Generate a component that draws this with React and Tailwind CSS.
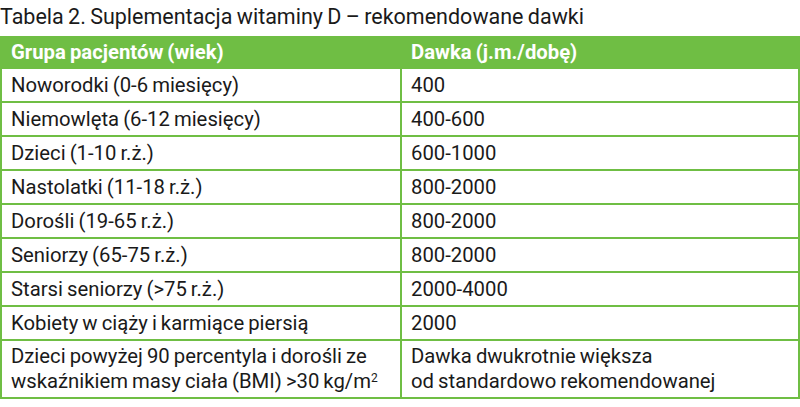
import React from 'react';

const rows = [
  ['Noworodki (0-6 miesięcy)', '400'],
  ['Niemowlęta (6-12 miesięcy)', '400-600'],
  ['Dzieci (1-10 r.ż.)', '600-1000'],
  ['Nastolatki (11-18 r.ż.)', '800-2000'],
  ['Dorośli (19-65 r.ż.)', '800-2000'],
  ['Seniorzy (65-75 r.ż.)', '800-2000'],
  ['Starsi seniorzy (>75 r.ż.)', '2000-4000'],
  ['Kobiety w ciąży i karmiące piersią', '2000'],
];

const App = () => {
  return (
    <div className="w-[800px] bg-white text-[#1a1a1a] font-['Roboto',sans-serif] [word-spacing:-1px]">
      {/* title */}
      <h1 className="h-[36px] pt-[3px] text-[21.5px] leading-[27px] font-normal">
        Tabela 2. Suplementacja witaminy D – rekomendowane dawki
      </h1>

      <table className="w-[800px] border-collapse table-fixed text-[20.3px] leading-[25px]">
        <thead>
          <tr className="bg-[#6fbe44] text-white h-[31px]">
            <th className="w-[400px] border-2 border-[#6fbe44] px-[9px] text-left font-bold">
              Grupa pacjentów (wiek)
            </th>
            <th className="border-2 border-[#6fbe44] px-[9px] text-left font-bold">
              Dawka (j.m./dobę)
            </th>
          </tr>
        </thead>
        <tbody>
          {rows.map(([group, dose]) => (
            <tr key={group} className="h-[34px]">
              <td className="border-2 border-[#6fbe44] px-[9px]">{group}</td>
              <td className="border-2 border-[#6fbe44] px-[9px]">{dose}</td>
            </tr>
          ))}
          <tr className="h-[58px]">
            <td className="border-2 border-[#6fbe44] px-[9px] py-[3px]">
              Dzieci powyżej 90 percentyla i dorośli ze wskaźnikiem masy ciała (BMI) &gt;30 kg/m
              <sup className="text-[12px]">2</sup>
            </td>
            <td className="border-2 border-[#6fbe44] px-[9px] py-[3px]">
              Dawka dwukrotnie większa
              <br />
              od standardowo rekomendowanej
            </td>
          </tr>
        </tbody>
      </table>
    </div>
  );
};

export default App;
